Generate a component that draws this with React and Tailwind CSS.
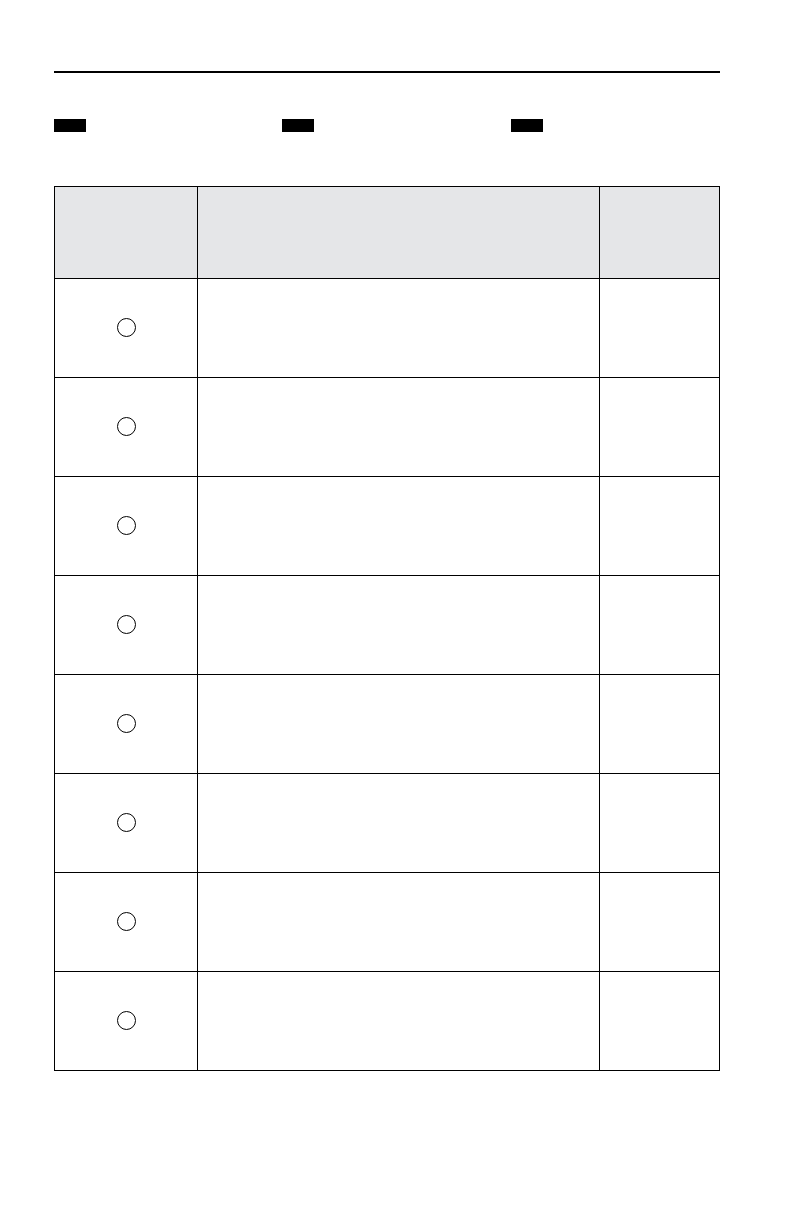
const legend = ["w-[228px]", "w-[229px]", "w-[100px]"];
const rows = Array.from({ length: 8 }, (_, i) => i);

const App = () => {
  return (
    <div className="bg-white font-['Liberation_Sans',sans-serif]">
      <div className="ml-[54px] w-[666px] pt-[71px] pb-[60px]">
        <div className="h-[1.5px] bg-black" />

        <div className="mt-[46px] flex">
          {legend.map((w, i) => (
            <div key={i} className={w}>
              <span className="block h-[13px] w-[32px] bg-black" />
            </div>
          ))}
        </div>

        <div className="mt-[54px] border-x border-t border-black">
          <div className="grid h-[92px] grid-cols-[143px_402px_1fr] border-b border-black bg-[#e5e6e8]">
            <div className="border-r border-black" />
            <div className="border-r border-black" />
            <div />
          </div>

          {rows.map((r) => (
            <div
              key={r}
              className="grid h-[99px] grid-cols-[143px_402px_1fr] border-b border-black"
            >
              <div className="flex items-center justify-center border-r border-black">
                <span className="block h-[19px] w-[19px] rounded-full border-[1.5px] border-black" />
              </div>
              <div className="border-r border-black" />
              <div />
            </div>
          ))}
        </div>
      </div>
    </div>
  );
};

export default App;
